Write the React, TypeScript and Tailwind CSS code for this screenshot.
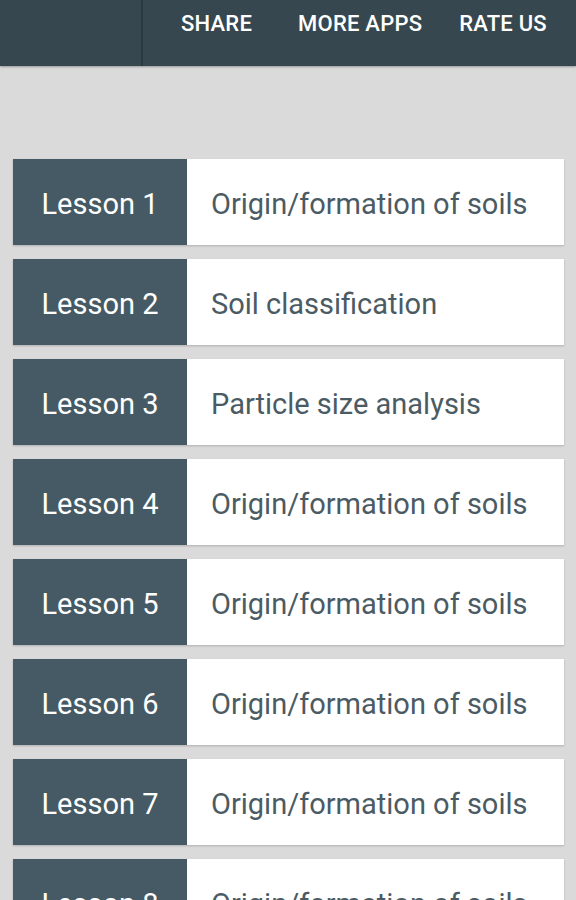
import React from "react";

const lessons = [
  "Origin/formation of soils",
  "Soil classification",
  "Particle size analysis",
  "Origin/formation of soils",
  "Origin/formation of soils",
  "Origin/formation of soils",
  "Origin/formation of soils",
  "Origin/formation of soils",
];

export default function App() {
  return (
    <div className="h-[900px] overflow-hidden bg-[#dadada] font-['Roboto',sans-serif]">
      <header className="flex h-[66px] bg-[#37474f] shadow-[0_1px_2px_rgba(0,0,0,0.3)]">
        <div className="w-[143px] border-r-2 border-[#2c3a40]" />
        <nav className="flex flex-1 items-start pt-[7px] text-[22px] font-medium tracking-[0.01em] text-white">
          <span className="ml-[38px]">SHARE</span>
          <span className="ml-[46px]">MORE APPS</span>
          <span className="ml-[37px]">RATE US</span>
        </nav>
      </header>

      <ul className="flex flex-col gap-[14px] pl-[13px] pr-[12px] pt-[93px]">
        {lessons.map((title, i) => (
          <li
            key={i}
            className="flex h-[86px] bg-white shadow-[0_1px_2px_rgba(0,0,0,0.2)]"
          >
            <div className="flex w-[174px] shrink-0 items-center justify-center bg-[#455a64] pt-[5px] text-[29px] text-white">
              Lesson {i + 1}
            </div>
            <div className="flex items-center whitespace-nowrap pl-[24px] pt-[5px] text-[29px] text-[#4b5b63]">
              {title}
            </div>
          </li>
        ))}
      </ul>
    </div>
  );
}
